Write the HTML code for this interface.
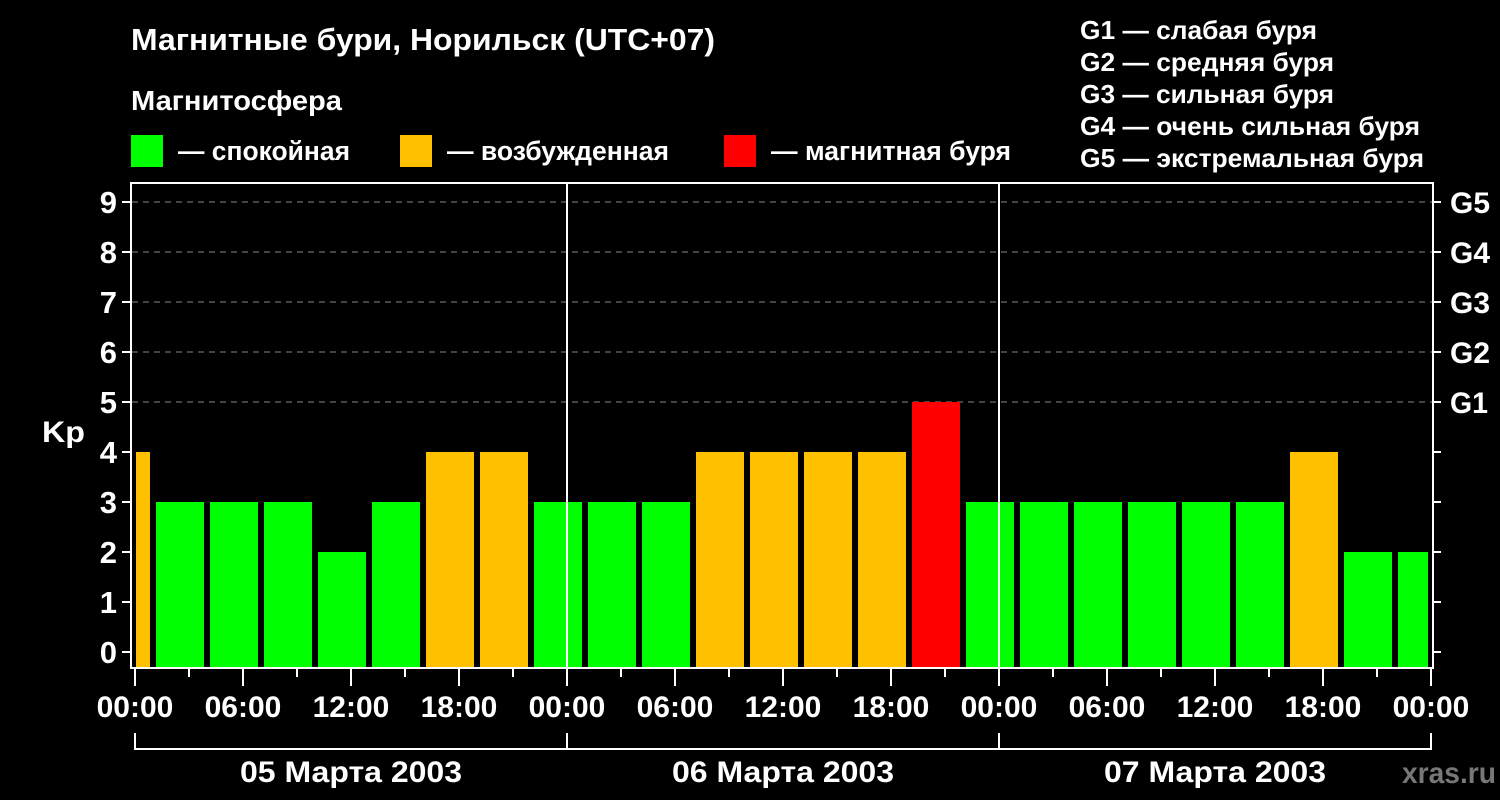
<!DOCTYPE html>
<html><head><meta charset="utf-8"><style>
html,body{margin:0;padding:0;background:#000;}
svg{display:block}
text{font-family:"Liberation Sans",sans-serif;font-weight:bold;fill:#fff}
</style></head><body>
<svg width="1500" height="800" viewBox="0 0 1500 800" xmlns="http://www.w3.org/2000/svg">
<rect width="1500" height="800" fill="#000"/>
<text x="131" y="50" font-size="31" textLength="584" lengthAdjust="spacingAndGlyphs">Магнитные бури, Норильск (UTC+07)</text>
<text x="131" y="110" font-size="28" textLength="211" lengthAdjust="spacingAndGlyphs">Магнитосфера</text>
<rect x="131" y="135" width="32" height="32" fill="#00ff00"/>
<text x="178" y="160" font-size="27" textLength="172" lengthAdjust="spacingAndGlyphs">— спокойная</text>
<rect x="400" y="135" width="32" height="32" fill="#ffc000"/>
<text x="447" y="160" font-size="27" textLength="222" lengthAdjust="spacingAndGlyphs">— возбужденная</text>
<rect x="724" y="135" width="32" height="32" fill="#ff0000"/>
<text x="771" y="160" font-size="27" textLength="240" lengthAdjust="spacingAndGlyphs">— магнитная буря</text>
<g font-size="26">
<text x="1080" y="39" textLength="237" lengthAdjust="spacingAndGlyphs">G1 — слабая буря</text>
<text x="1080" y="71" textLength="254" lengthAdjust="spacingAndGlyphs">G2 — средняя буря</text>
<text x="1080" y="103" textLength="254" lengthAdjust="spacingAndGlyphs">G3 — сильная буря</text>
<text x="1080" y="135" textLength="340" lengthAdjust="spacingAndGlyphs">G4 — очень сильная буря</text>
<text x="1080" y="167" textLength="344" lengthAdjust="spacingAndGlyphs">G5 — экстремальная буря</text>
</g>
<g stroke="#888" stroke-width="1" stroke-dasharray="6,5">
<line x1="132" y1="202" x2="1432" y2="202"/>
<line x1="132" y1="252" x2="1432" y2="252"/>
<line x1="132" y1="302" x2="1432" y2="302"/>
<line x1="132" y1="352" x2="1432" y2="352"/>
<line x1="132" y1="402" x2="1432" y2="402"/>
</g>
<g>
<rect x="136" y="452" width="14" height="216" fill="#ffc000"/>
<rect x="156" y="502" width="48" height="166" fill="#00ff00"/>
<rect x="210" y="502" width="48" height="166" fill="#00ff00"/>
<rect x="264" y="502" width="48" height="166" fill="#00ff00"/>
<rect x="318" y="552" width="48" height="116" fill="#00ff00"/>
<rect x="372" y="502" width="48" height="166" fill="#00ff00"/>
<rect x="426" y="452" width="48" height="216" fill="#ffc000"/>
<rect x="480" y="452" width="48" height="216" fill="#ffc000"/>
<rect x="534" y="502" width="48" height="166" fill="#00ff00"/>
<rect x="588" y="502" width="48" height="166" fill="#00ff00"/>
<rect x="642" y="502" width="48" height="166" fill="#00ff00"/>
<rect x="696" y="452" width="48" height="216" fill="#ffc000"/>
<rect x="750" y="452" width="48" height="216" fill="#ffc000"/>
<rect x="804" y="452" width="48" height="216" fill="#ffc000"/>
<rect x="858" y="452" width="48" height="216" fill="#ffc000"/>
<rect x="912" y="402" width="48" height="266" fill="#ff0000"/>
<rect x="966" y="502" width="48" height="166" fill="#00ff00"/>
<rect x="1020" y="502" width="48" height="166" fill="#00ff00"/>
<rect x="1074" y="502" width="48" height="166" fill="#00ff00"/>
<rect x="1128" y="502" width="48" height="166" fill="#00ff00"/>
<rect x="1182" y="502" width="48" height="166" fill="#00ff00"/>
<rect x="1236" y="502" width="48" height="166" fill="#00ff00"/>
<rect x="1290" y="452" width="48" height="216" fill="#ffc000"/>
<rect x="1344" y="552" width="48" height="116" fill="#00ff00"/>
<rect x="1398" y="552" width="30" height="116" fill="#00ff00"/>
</g>
<g stroke="#fff" stroke-width="2" fill="none">
<rect x="131" y="183" width="1302" height="485"/>
<line x1="567" y1="183" x2="567" y2="668"/>
<line x1="999" y1="183" x2="999" y2="668"/>
<path d="M122 202H131M122 252H131M122 302H131M122 352H131M122 402H131M122 452H131M122 502H131M122 552H131M122 602H131M122 652H131"/>
<path d="M1433 202H1441M1433 252H1441M1433 302H1441M1433 352H1441M1433 402H1441M1433 452H1441M1433 502H1441M1433 552H1441M1433 602H1441M1433 652H1441"/>
<path d="M135 668V686M243 668V686M351 668V686M459 668V686M567 668V686M675 668V686M783 668V686M891 668V686M999 668V686M1107 668V686M1215 668V686M1323 668V686M1431 668V686"/>
<path d="M189 668V677M297 668V677M405 668V677M513 668V677M621 668V677M729 668V677M837 668V677M945 668V677M1053 668V677M1161 668V677M1269 668V677M1377 668V677"/>
<path d="M135 733V749H1431V733M567 733V749M999 733V749"/>
</g>
<g font-size="31" text-anchor="end">
<text x="117" y="213">9</text><text x="117" y="263">8</text><text x="117" y="313">7</text>
<text x="117" y="363">6</text><text x="117" y="413">5</text><text x="117" y="463">4</text>
<text x="117" y="513">3</text><text x="117" y="563">2</text><text x="117" y="613">1</text>
<text x="117" y="663">0</text>
</g>
<text x="42" y="442" font-size="30" textLength="43" lengthAdjust="spacingAndGlyphs">Kp</text>
<g font-size="30">
<text x="1450" y="213" textLength="40" lengthAdjust="spacingAndGlyphs">G5</text>
<text x="1450" y="263" textLength="40" lengthAdjust="spacingAndGlyphs">G4</text>
<text x="1450" y="313" textLength="40" lengthAdjust="spacingAndGlyphs">G3</text>
<text x="1450" y="363" textLength="40" lengthAdjust="spacingAndGlyphs">G2</text>
<text x="1450" y="413" textLength="38" lengthAdjust="spacingAndGlyphs">G1</text>
</g>
<g font-size="30" text-anchor="middle">
<text x="135" y="717">00:00</text><text x="243" y="717">06:00</text><text x="351" y="717">12:00</text><text x="459" y="717">18:00</text>
<text x="567" y="717">00:00</text><text x="675" y="717">06:00</text><text x="783" y="717">12:00</text><text x="891" y="717">18:00</text>
<text x="999" y="717">00:00</text><text x="1107" y="717">06:00</text><text x="1215" y="717">12:00</text><text x="1323" y="717">18:00</text>
<text x="1431" y="717">00:00</text>
<text x="351" y="782" textLength="222" lengthAdjust="spacingAndGlyphs">05 Марта 2003</text>
<text x="783" y="782" textLength="222" lengthAdjust="spacingAndGlyphs">06 Марта 2003</text>
<text x="1215" y="782" textLength="222" lengthAdjust="spacingAndGlyphs">07 Марта 2003</text>
</g>
<text x="1402" y="783" font-size="30" textLength="94" lengthAdjust="spacingAndGlyphs" style="fill:#777">xras.ru</text>
</svg>
</body></html>
